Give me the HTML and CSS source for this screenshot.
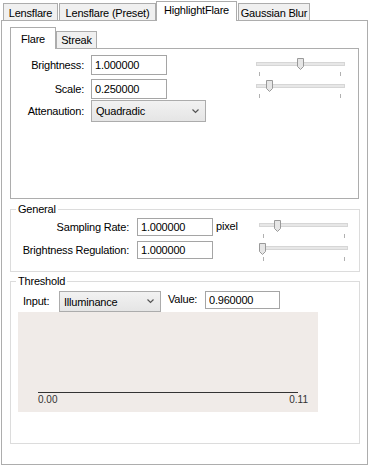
FILE: index.html
```html
<!DOCTYPE html>
<html lang="en">
<head>
    <meta charset="UTF-8">
    <meta name="viewport" content="width=device-width, initial-scale=1.0">
    <title>HighlightFlare</title>
    <link rel="stylesheet" href="styles.css">
</head>
<body>
    <div class="tabbar">
        <div class="tab" style="width: 55px;">Lensflare</div>
        <div class="tab" style="width: 97px;">Lensflare (Preset)</div>
        <div class="tab selected" style="width: 81px;">HighlightFlare</div>
        <div class="tab" style="width: 72px;">Gaussian Blur</div>
    </div>

    <div class="pane">
        <div class="subtabbar">
            <div class="subtab selected">Flare</div>
            <div class="subtab">Streak</div>
        </div>
        <div class="subpane">
            <div class="flare-body">
                <div class="form">
                    <div class="field">
                        <label>Brightness:</label>
                        <input type="text" value="1.000000">
                    </div>
                    <div class="field">
                        <label>Scale:</label>
                        <input type="text" value="0.250000">
                    </div>
                    <div class="field combo-field">
                        <label>Attenaution:</label>
                        <div class="combo wide">
                            <span>Quadradic</span>
                            <svg width="7" height="5" viewBox="0 0 7 5"><path d="M0.5 0.5 L3.5 3.5 L6.5 0.5" fill="none" stroke="#555" stroke-width="1.2"/></svg>
                        </div>
                    </div>
                </div>
                <div class="sliders">
                    <svg class="slider" width="89" height="20" viewBox="0 0 89 20">
                        <rect x="0.5" y="4.5" width="88" height="3" fill="#e7e7e7" stroke="#d6d6d6"/>
                        <line x1="3.5" y1="14" x2="3.5" y2="18" stroke="#b0b0b0"/>
                        <line x1="84.5" y1="14" x2="84.5" y2="18" stroke="#b0b0b0"/>
                        <path transform="translate(41 0)" d="M0.5 0.5 H6.5 V8.5 L3.5 11.5 L0.5 8.5 Z" fill="#e6e6e6" stroke="#9a9a9a"/>
                    </svg>
                    <svg class="slider" width="89" height="20" viewBox="0 0 89 20">
                        <rect x="0.5" y="4.5" width="88" height="3" fill="#e7e7e7" stroke="#d6d6d6"/>
                        <line x1="3.5" y1="14" x2="3.5" y2="18" stroke="#b0b0b0"/>
                        <line x1="84.5" y1="14" x2="84.5" y2="18" stroke="#b0b0b0"/>
                        <path transform="translate(10 0)" d="M0.5 0.5 H6.5 V8.5 L3.5 11.5 L0.5 8.5 Z" fill="#e6e6e6" stroke="#9a9a9a"/>
                    </svg>
                </div>
            </div>
        </div>

        <div class="group general">
            <div class="group-title">General</div>
            <div class="grow">
                <label>Sampling Rate:</label>
                <input type="text" value="1.000000">
                <span class="unit">pixel</span>
                <svg class="slider" width="89" height="20" viewBox="0 0 89 20">
                    <rect x="0.5" y="3.5" width="88" height="3" fill="#e7e7e7" stroke="#d6d6d6"/>
                    <line x1="4.5" y1="14" x2="4.5" y2="18" stroke="#b0b0b0"/>
                    <line x1="85.5" y1="14" x2="85.5" y2="18" stroke="#b0b0b0"/>
                    <path transform="translate(15 0)" d="M0.5 0.5 H6.5 V8.5 L3.5 11.5 L0.5 8.5 Z" fill="#e6e6e6" stroke="#9a9a9a"/>
                </svg>
            </div>
            <div class="grow">
                <label>Brightness Regulation:</label>
                <input type="text" value="1.000000">
                <span class="unit"></span>
                <svg class="slider" width="89" height="20" viewBox="0 0 89 20">
                    <rect x="0.5" y="3.5" width="88" height="3" fill="#e7e7e7" stroke="#d6d6d6"/>
                    <line x1="4.5" y1="14" x2="4.5" y2="18" stroke="#b0b0b0"/>
                    <line x1="85.5" y1="14" x2="85.5" y2="18" stroke="#b0b0b0"/>
                    <path transform="translate(0 0)" d="M0.5 0.5 H6.5 V8.5 L3.5 11.5 L0.5 8.5 Z" fill="#e6e6e6" stroke="#9a9a9a"/>
                </svg>
            </div>
        </div>

        <div class="group threshold">
            <div class="group-title">Threshold</div>
            <div class="trow">
                <label class="input-label">Input:</label>
                <div class="combo narrow">
                    <span>Illuminance</span>
                    <svg width="7" height="5" viewBox="0 0 7 5"><path d="M0.5 0.5 L3.5 3.5 L6.5 0.5" fill="none" stroke="#555" stroke-width="1.2"/></svg>
                </div>
                <label class="value-label">Value:</label>
                <input type="text" value="0.960000">
            </div>
            <svg class="plot" width="300" height="100" viewBox="0 0 300 100">
                <rect width="300" height="100" fill="#f0ebe8"/>
                <line x1="20" y1="80.5" x2="280" y2="80.5" stroke="#333" stroke-width="1.2"/>
                <text x="20" y="91" class="axis">0.00</text>
                <text x="290" y="91" class="axis" text-anchor="end">0.11</text>
            </svg>
        </div>
    </div>
</body>
</html>
```

FILE: styles.css
```css
body {
    margin: 0;
    padding: 0 2px 0 1px;
    background-color: #ffffff;
    color: #000000;
    font-family: "Liberation Sans", Arial, sans-serif;
    font-size: 11px;
    letter-spacing: -0.2px;
    width: 370px;
    height: 466px;
    box-sizing: border-box;
    overflow: hidden;
}

.tabbar {
    display: flex;
    align-items: flex-end;
    height: 21px;
    padding-left: 2px;
    margin-bottom: -1px;
    position: relative;
    z-index: 1;
}

.tab {
    height: 17px;
    margin-bottom: 1px;
    margin-right: 1px;
    box-sizing: border-box;
    border: 1px solid #acacac;
    border-bottom: none;
    background-color: #f0f0f0;
    display: flex;
    align-items: center;
    justify-content: center;
    padding-top: 1px;
    white-space: nowrap;
}

.tab.selected {
    height: 20px;
    margin-bottom: 0;
    margin-left: -1px;
    background-color: #ffffff;
    padding-top: 0;
    padding-bottom: 3px;
}

.pane {
    border: 1px solid #adadad;
    padding: 6px 7px 20px 8px;
    background-color: #ffffff;
}

.subtabbar {
    display: flex;
    align-items: flex-end;
    height: 22px;
    margin-bottom: -1px;
    position: relative;
    z-index: 1;
}

.subtab {
    height: 17px;
    margin-bottom: 1px;
    box-sizing: border-box;
    border: 1px solid #acacac;
    border-bottom: none;
    background-color: #f0f0f0;
    width: 41px;
    margin-left: -1px;
    display: flex;
    align-items: center;
    justify-content: center;
}

.subtab.selected {
    height: 22px;
    width: 46px;
    margin-left: 0;
    margin-bottom: 0;
    background-color: #ffffff;
    margin-right: 1px;
}

.subpane {
    border: 1px solid #adadad;
    height: 151px;
    box-sizing: border-box;
    margin-right: 1px;
}

.flare-body {
    display: flex;
    padding: 6px 13px 0 0;
}

.field {
    display: flex;
    align-items: center;
    height: 20px;
}

.field + .field {
    margin-top: 4px;
}

.field.combo-field {
    height: 22px;
    margin-top: 1px;
}

.field label {
    width: 73px;
    margin-right: 7px;
    text-align: right;
}

input[type="text"] {
    font-family: inherit;
    font-size: 11px;
    letter-spacing: -0.2px;
    width: 76px;
    height: 20px;
    box-sizing: border-box;
    border: 1px solid #a5a5a5;
    padding: 0 3px;
    margin: 0;
    color: #000000;
    background-color: #ffffff;
}

.combo {
    height: 22px;
    box-sizing: border-box;
    border: 1px solid #acacac;
    background: linear-gradient(#f2f2f2, #e5e5e5);
    display: flex;
    align-items: center;
    justify-content: space-between;
    padding: 0 6px 0 4px;
}

.combo.wide {
    width: 115px;
}

.combo.narrow {
    width: 102px;
    height: 21px;
}

.sliders {
    margin-left: auto;
    padding-top: 3px;
    display: flex;
    flex-direction: column;
    gap: 2px;
}

.slider {
    display: block;
}

.group {
    border: 1px solid #dcdcdc;
}

.group-title {
    margin: -7px 0 0 5px;
    padding: 0 2px;
    line-height: 13px;
    background-color: #ffffff;
    width: fit-content;
}

.general {
    margin-top: 10px;
    padding-bottom: 8px;
}

.grow {
    display: flex;
    align-items: flex-start;
    height: 22px;
    margin-top: 1px;
}

.general .group-title + .grow {
    margin-top: 2px;
}

.grow label {
    width: 118px;
    margin-right: 8px;
    text-align: right;
    line-height: 18px;
}

.grow input[type="text"] {
    height: 18px;
}

.unit {
    width: 43px;
    padding-left: 3px;
    line-height: 16px;
}

.grow .slider {
    margin-top: 2px;
}

.threshold {
    margin-top: 9px;
    padding-bottom: 31px;
}

.trow {
    display: flex;
    align-items: flex-start;
    margin-top: 3px;
    height: 21px;
}

.input-label {
    width: 30px;
    margin-left: 12px;
    margin-right: 6px;
    line-height: 21px;
}

.value-label {
    width: 31px;
    margin-left: 7px;
    margin-right: 6px;
    line-height: 16px;
}

.trow input[type="text"] {
    width: 75px;
    height: 18px;
}

.plot {
    display: block;
    margin-left: 7px;
}

.axis {
    font-family: "Liberation Sans", Arial, sans-serif;
    font-size: 10px;
    fill: #333333;
    letter-spacing: 0;
}
```
